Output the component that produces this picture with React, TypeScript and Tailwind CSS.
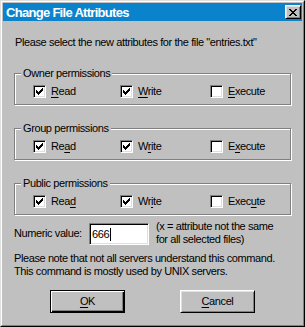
import React from "react";

const CHECK: [number, number][] = [
  [6, 0], [5, 1], [6, 1], [0, 2], [4, 2], [5, 2], [6, 2],
  [0, 3], [1, 3], [3, 3], [4, 3], [5, 3],
  [0, 4], [1, 4], [2, 4], [3, 4], [4, 4],
  [1, 5], [2, 5], [3, 5], [2, 6],
];

const CROSS: [number, number][] = [
  [0, 0], [1, 0], [6, 0], [7, 0],
  [1, 1], [2, 1], [5, 1], [6, 1],
  [2, 2], [3, 2], [4, 2], [5, 2],
  [3, 3], [4, 3],
  [2, 4], [3, 4], [4, 4], [5, 4],
  [1, 5], [2, 5], [5, 5], [6, 5],
  [0, 6], [1, 6], [6, 6], [7, 6],
];

function Pixels({ dots, w, h }: { dots: [number, number][]; w: number; h: number }) {
  return (
    <svg width={w} height={h} viewBox={`0 0 ${w} ${h}`} shapeRendering="crispEdges">
      {dots.map(([x, y]) => (
        <rect key={`${x}-${y}`} x={x} y={y} width={1} height={1} fill="#000" />
      ))}
    </svg>
  );
}

function Accel({ text, at }: { text: string; at: number }) {
  return (
    <span>
      {text.slice(0, at)}
      <u className="underline decoration-1 underline-offset-[2px]">{text[at]}</u>
      {text.slice(at + 1)}
    </span>
  );
}

function Checkbox({ checked, label, at, width }: { checked: boolean; label: string; at: number; width: string }) {
  return (
    <div className={`flex items-center gap-[5px] ${width}`}>
      <span className="flex h-[13px] w-[13px] items-center justify-center border border-t-[#808080] border-l-[#808080] border-r-white border-b-white bg-white shadow-[inset_1px_1px_0_#000,inset_-1px_-1px_0_#dfdfdf]">
        {checked && <Pixels dots={CHECK} w={7} h={7} />}
      </span>
      <Accel text={label} at={at} />
    </div>
  );
}

type Perm = { title: string; read: number; write: number; exec: number };

const groups: Perm[] = [
  { title: "Owner permissions", read: 0, write: 0, exec: 0 },
  { title: "Group permissions", read: 2, write: 1, exec: 1 },
  { title: "Public permissions", read: 3, write: 2, exec: 4 },
];

function Group({ g, first }: { g: Perm; first: boolean }) {
  return (
    <div
      className={`relative h-[32px] w-[277px] border border-[#808080] shadow-[inset_1px_1px_0_#fff,1px_1px_0_#fff] ${
        first ? "mt-[24px]" : "mt-[23px]"
      }`}
    >
      <span className="absolute left-[6px] top-[-7px] bg-[#c0c0c0] px-[2px]">{g.title}</span>
      <div className="flex pl-[18px] pt-[11px]">
        <Checkbox checked label="Read" at={g.read} width="w-[87px]" />
        <Checkbox checked label="Write" at={g.write} width="w-[90px]" />
        <Checkbox checked={false} label="Execute" at={g.exec} width="w-[80px]" />
      </div>
    </div>
  );
}

export default function App() {
  return (
    <div className="h-[327px] w-[305px] border border-t-[#dfdfdf] border-l-[#dfdfdf] border-r-black border-b-black bg-[#c0c0c0] font-['Liberation_Sans',Arial,sans-serif] text-[11px] leading-[13px] tracking-[-0.4px] text-black">
      <div className="h-full border border-t-white border-l-white border-r-[#808080] border-b-[#808080] p-px">
        <div className="flex h-[18px] items-center justify-between bg-[#0a83cc] pl-[3px] pr-[1px]">
          <span className="text-[13px] font-bold tracking-[-0.7px] text-white">Change File Attributes</span>
          <button className="flex h-[14px] w-[16px] items-center justify-center border border-t-white border-l-white border-r-black border-b-black bg-[#c0c0c0] shadow-[inset_1px_1px_0_#dfdfdf,inset_-1px_-1px_0_#808080]">
            <Pixels dots={CROSS} w={8} h={7} />
          </button>
        </div>

        <div className="pl-[11px] pr-[9px]">
          <p className="mt-[15px] pl-px">Please select the new attributes for the file "entries.txt"</p>

          {groups.map((g, i) => (
            <Group key={g.title} g={g} first={i === 0} />
          ))}

          <div className="mt-[8px] flex items-start">
            <span className="mt-[4px] w-[75px]">Numeric value:</span>
            <div className="flex h-[22px] w-[60px] items-center border border-t-[#808080] border-l-[#808080] border-r-white border-b-white bg-white pl-[2px] shadow-[inset_1px_1px_0_#000,inset_-1px_-1px_0_#dfdfdf]">
              <span>666</span>
              <span className="ml-px h-[13px] w-px bg-black" />
            </div>
            <div className="-mt-[3px] ml-[7px]">
              <div>(x = attribute not the same</div>
              <div>for all selected files)</div>
            </div>
          </div>

          <div className="mt-[6px]">
            <div>Please note that not all servers understand this command.</div>
            <div>This command is mostly used by UNIX servers.</div>
          </div>

          <div className="ml-[36px] mt-[12px] flex gap-[55px]">
            <button className="h-[23px] w-[75px] border border-black shadow-[inset_1px_1px_0_#fff,inset_-1px_-1px_0_#000,inset_-2px_-2px_0_#808080]">
              <Accel text="OK" at={0} />
            </button>
            <button className="h-[23px] w-[75px] border border-t-white border-l-white border-r-black border-b-black shadow-[inset_1px_1px_0_#dfdfdf,inset_-1px_-1px_0_#808080]">
              <Accel text="Cancel" at={0} />
            </button>
          </div>
        </div>
      </div>
    </div>
  );
}
